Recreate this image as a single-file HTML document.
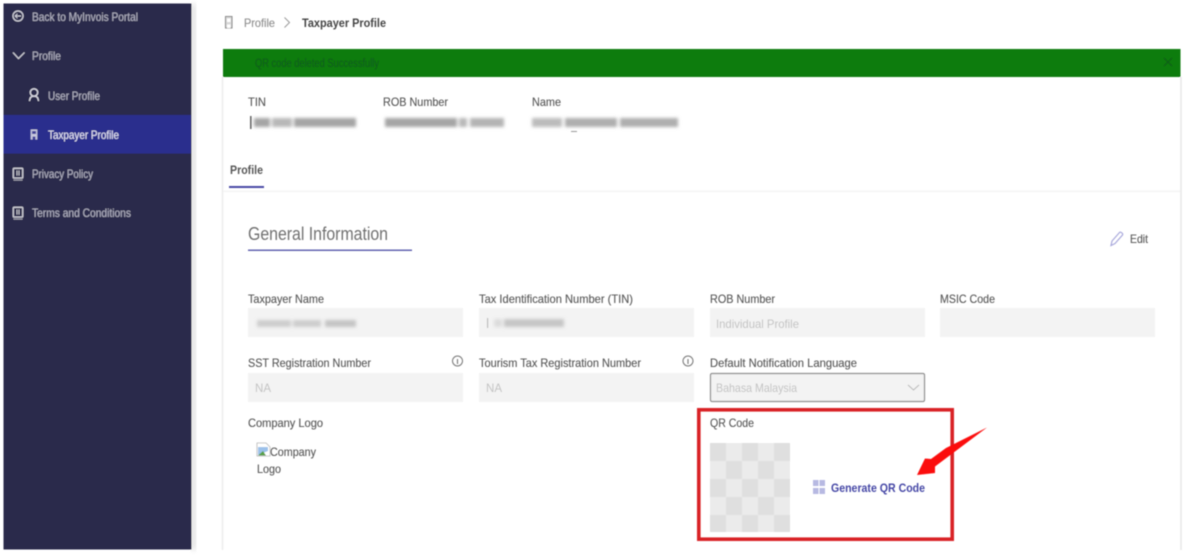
<!DOCTYPE html>
<html lang="en"><head><meta charset="utf-8"><title>Taxpayer Profile</title>
<style>
html,body{margin:0;padding:0;background:#fff;width:1187px;height:557px;overflow:hidden}
svg{display:block}
text{font-family:"Liberation Sans",sans-serif;font-size:12px;fill:#565656;stroke:#565656;stroke-width:.12px}
.s text{fill:#b0b0c0;stroke:#b0b0c0;font-size:12px}
.b{font-weight:bold}
</style></head><body>
<svg width="1187" height="557" viewBox="0 0 1187 557" xmlns="http://www.w3.org/2000/svg">
<defs>
<filter id="soft" x="-5%" y="-5%" width="110%" height="110%"><feGaussianBlur stdDeviation="0.45"/></filter>
<filter id="bl" x="-10%" y="-60%" width="120%" height="220%"><feGaussianBlur stdDeviation="1.600"/></filter>
<filter id="sh" x="-5%" y="-5%" width="110%" height="110%"><feGaussianBlur stdDeviation="3"/></filter>
</defs>
<rect width="1187" height="557" fill="#fff"/>
<g filter="url(#soft)">
<!-- sidebar -->
<rect x="191" y="4" width="5" height="546" fill="#ddd" filter="url(#sh)"/>
<rect x="3.500" y="3.500" width="188" height="546" fill="#2b2b4b"/>
<rect x="3.500" y="115" width="187.500" height="38.500" fill="#2b2d8d"/>
<g class="s">
<text x="32" y="21" textLength="106" lengthAdjust="spacingAndGlyphs">Back to MyInvois Portal</text>
<text x="32" y="60" textLength="29" lengthAdjust="spacingAndGlyphs">Profile</text>
<text x="48" y="100" textLength="52" lengthAdjust="spacingAndGlyphs">User Profile</text>
<text x="48" y="139" textLength="71" lengthAdjust="spacingAndGlyphs" style="fill:#e2e2f2;stroke:#e2e2f2">Taxpayer Profile</text>
<text x="32" y="178" textLength="61" lengthAdjust="spacingAndGlyphs">Privacy Policy</text>
<text x="32" y="217" textLength="99" lengthAdjust="spacingAndGlyphs">Terms and Conditions</text>
</g>
<!-- sidebar icons -->
<circle cx="18" cy="16" r="5" fill="none" stroke="#d2d2dc" stroke-width="1.200"/>
<path d="M21 16H15.400M17.400 13.800L15.200 16L17.400 18.200" fill="none" stroke="#d2d2dc" stroke-width="1"/>
<path d="M13 52.500L18.500 58.500L24.500 52.500" fill="none" stroke="#d2d2dc" stroke-width="1.200"/>
<circle cx="34" cy="92.500" r="3.700" fill="none" stroke="#dcdce6" stroke-width="1.300"/>
<path d="M29.500 101C29.800 97.500 31.500 96 34 96S38.200 97.500 38.500 101" fill="none" stroke="#dcdce6" stroke-width="1.300"/>
<rect x="30.700" y="129.500" width="6.600" height="10" fill="#c8c8de"/>
<rect x="32" y="131" width="4" height="3" fill="#44449a"/>
<path d="M32.500 139.500V136.500H35.500V139.500" fill="#44449a"/>
<g fill="none" stroke="#d2d2da" stroke-width="1.300">
<rect x="13.300" y="168.300" width="9.400" height="9.700" rx=".8"/><rect x="13.300" y="207.300" width="9.400" height="9.700" rx=".8"/>
</g>
<path d="M17 170.500V175.500M19 170.500V175.500M17 209.500V214.500M19 209.500V214.500" stroke="#d2d2da" stroke-width=".9"/>
<path d="M13.500 180H22.500M13.500 219H22.500" stroke="#a0a0ae" stroke-width="1.300"/>

<!-- breadcrumb -->
<rect x="225.500" y="16.500" width="6.500" height="11.500" fill="#d8d8d8" stroke="#8a8a8a" stroke-width="1"/>
<rect x="227" y="18.500" width="3.500" height="3.500" fill="#fff"/>
<path d="M227 28V24.500H230.500V28" fill="#fff"/>
<text x="244" y="27" textLength="31" lengthAdjust="spacingAndGlyphs" style="fill:#8c8c8c;stroke:#8c8c8c">Profile</text>
<path d="M284.500 17.500L289.500 22.500L284.500 27.500" fill="none" stroke="#9a9a9a" stroke-width="1"/>
<text x="302" y="27" textLength="84" lengthAdjust="spacingAndGlyphs" class="b" style="fill:#444;stroke:none">Taxpayer Profile</text>

<!-- card shells -->
<path d="M222.500 77V550" stroke="#ececec" stroke-width="1.500"/>
<path d="M1181 77V550" stroke="#ececec" stroke-width="2"/>
<rect x="223" y="190.500" width="957" height="1.500" fill="#f4f4f4"/>

<!-- banner -->
<rect x="223" y="49" width="957.500" height="28" fill="#107c10"/>
<text x="255" y="67" textLength="124" lengthAdjust="spacingAndGlyphs" style="fill:#0d5c1a;stroke:#0d5c1a;font-size:11.500px">QR code deleted Successfully</text>
<path d="M1164 58L1172 66M1172 58L1164 66" stroke="#0d5c1a" stroke-width="1.100"/>

<!-- header fields -->
<text x="248" y="106" textLength="18" lengthAdjust="spacingAndGlyphs">TIN</text>
<text x="383" y="106" textLength="65" lengthAdjust="spacingAndGlyphs">ROB Number</text>
<text x="532" y="106" textLength="29" lengthAdjust="spacingAndGlyphs">Name</text>
<rect x="250" y="116" width="1.600" height="13" fill="#666"/>
<!-- redacted values -->
<g filter="url(#bl)" fill="#a4a4a4">
<rect x="254" y="118" width="16" height="9"/><rect x="272" y="118" width="20" height="9" fill="#b8b8b8"/><rect x="294" y="118" width="62" height="9"/>
<rect x="385" y="118" width="72" height="9"/><rect x="459" y="118" width="8" height="9" fill="#b8b8b8"/><rect x="470" y="118" width="34" height="9" fill="#b4b4b4"/>
<rect x="532" y="118" width="30" height="9" fill="#bcbcbc"/><rect x="565" y="118" width="52" height="9" fill="#aeaeae"/><rect x="620" y="118" width="58" height="9" fill="#aeaeae"/>
</g>
<rect x="571" y="131" width="6" height="1" fill="#999"/>

<!-- tab -->
<text x="230" y="174" textLength="33" lengthAdjust="spacingAndGlyphs" class="b" style="fill:#555;stroke:none">Profile</text>
<rect x="229" y="186" width="35" height="2" fill="#4a4aa6"/>

<!-- section title -->
<text x="248" y="240" textLength="140" lengthAdjust="spacingAndGlyphs" style="font-size:18px;fill:#707070;stroke:none">General Information</text>
<rect x="248" y="249.500" width="164" height="1.500" fill="#6264b0"/>
<path d="M1111 245.500L1112 241L1119.500 232.500C1120.500 231.500 1123.500 233.500 1122.500 235L1115 243.500Z" fill="none" stroke="#a9a9dc" stroke-width="1.200"/>
<text x="1130" y="243" textLength="18" lengthAdjust="spacingAndGlyphs">Edit</text>

<!-- row 1 -->
<text x="248" y="303" textLength="76" lengthAdjust="spacingAndGlyphs">Taxpayer Name</text>
<text x="479" y="303" textLength="154" lengthAdjust="spacingAndGlyphs">Tax Identification Number (TIN)</text>
<text x="710" y="303" textLength="65" lengthAdjust="spacingAndGlyphs">ROB Number</text>
<text x="940" y="303" textLength="55" lengthAdjust="spacingAndGlyphs">MSIC Code</text>
<g fill="#f3f3f3">
<rect x="248" y="308" width="215" height="29"/><rect x="479" y="308" width="215" height="29"/>
<rect x="710" y="308" width="215" height="29"/><rect x="940" y="308" width="215" height="29"/>
<rect x="248" y="373" width="215" height="29"/><rect x="479" y="373" width="215" height="29"/>
</g>
<g filter="url(#bl)" fill="#cdcdcd">
<rect x="257" y="320" width="34" height="7"/><rect x="293" y="320" width="28" height="7"/><rect x="325" y="320" width="31" height="7" fill="#c4c4c4"/>
<rect x="494" y="319" width="8" height="8" fill="#dcdcdc"/><rect x="504" y="319" width="60" height="8" fill="#c6c6c6"/>
</g>
<rect x="487" y="318" width="1.200" height="10" fill="#bbb"/>
<text x="716" y="328" textLength="83" lengthAdjust="spacingAndGlyphs" style="fill:#c2c2c2;stroke:none">Individual Profile</text>

<!-- row 2 -->
<text x="248" y="367" textLength="123" lengthAdjust="spacingAndGlyphs">SST Registration Number</text>
<text x="479" y="367" textLength="162" lengthAdjust="spacingAndGlyphs">Tourism Tax Registration Number</text>
<text x="710" y="367" textLength="147" lengthAdjust="spacingAndGlyphs">Default Notification Language</text>
<g fill="none" stroke="#777" stroke-width="1">
<circle cx="457.500" cy="361" r="5"/><circle cx="688" cy="361" r="5"/>
</g>
<path d="M457.500 359V364M688 359V364" stroke="#777" stroke-width="1.100"/>
<text x="255" y="392" textLength="16" lengthAdjust="spacingAndGlyphs" style="fill:#c2c2c2;stroke:none">NA</text>
<text x="486" y="392" textLength="16" lengthAdjust="spacingAndGlyphs" style="fill:#c2c2c2;stroke:none">NA</text>
<rect x="710.500" y="373.500" width="214" height="28" rx="1.500" fill="#f3f3f3" stroke="#8c8c8c" stroke-width="1.200"/>
<text x="716" y="392" textLength="81" lengthAdjust="spacingAndGlyphs" style="fill:#c2c2c2;stroke:none">Bahasa Malaysia</text>
<path d="M908 385L913.500 390L919 385" fill="none" stroke="#b5b5b5" stroke-width="1"/>

<!-- logo -->
<text x="248" y="427" textLength="75" lengthAdjust="spacingAndGlyphs">Company Logo</text>
<path d="M257 443H266L270 447V456H257Z" fill="#fff" stroke="#b4b4b4" stroke-width="0.800"/>
<path d="M258 447H268V451L258 455Z" fill="#9cc1ea"/>
<path d="M258 455.500L263 451L266 455.500Z" fill="#58a04a"/>
<text x="270" y="456" textLength="46" lengthAdjust="spacingAndGlyphs">Company</text>
<text x="257" y="473" textLength="24" lengthAdjust="spacingAndGlyphs">Logo</text>

<!-- QR -->
<text x="710" y="427" textLength="44" lengthAdjust="spacingAndGlyphs">QR Code</text>
<rect x="710" y="443" width="80" height="89" fill="#ebebeb"/>
<g fill="#dfdfdf">
<rect x="710" y="443" width="16" height="18"/><rect x="742" y="443" width="16" height="18"/><rect x="774" y="443" width="16" height="18"/>
<rect x="726" y="461" width="16" height="18"/><rect x="758" y="461" width="16" height="18"/>
<rect x="710" y="479" width="16" height="18"/><rect x="742" y="479" width="16" height="18"/><rect x="774" y="479" width="16" height="18"/>
<rect x="726" y="497" width="16" height="18"/><rect x="758" y="497" width="16" height="18"/>
<rect x="710" y="515" width="16" height="17"/><rect x="742" y="515" width="16" height="17"/><rect x="774" y="515" width="16" height="17"/>
</g>
<g fill="#b7b9e2">
<rect x="813" y="480" width="5.500" height="6"/><rect x="819.500" y="480" width="5.500" height="6"/>
<rect x="813" y="488" width="5.500" height="6"/><rect x="819.500" y="488" width="5.500" height="6"/>
</g>
<text x="831" y="492" textLength="94" lengthAdjust="spacingAndGlyphs" class="b" style="fill:#4546a5;stroke:none">Generate QR Code</text>

<!-- annotation -->
<rect x="698.800" y="409.800" width="253.400" height="129.400" fill="none" stroke="#d92027" stroke-width="3.600"/>
<path d="M987 427.500L946 448L931 459L925 458.500L917 475L935 473L935 466.500Z" fill="#fb0a0a"/>
</g>
</svg>
</body></html>
